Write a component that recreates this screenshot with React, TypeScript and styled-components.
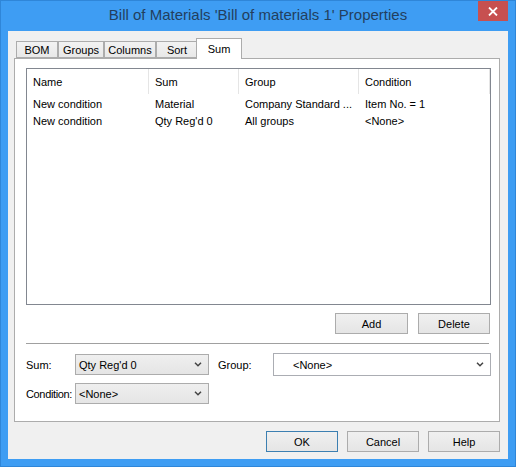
import React from "react";
import styled, { createGlobalStyle } from "styled-components";

const GlobalStyle = createGlobalStyle`
    html, body {
        margin: 0;
        padding: 0;
    }
    body {
        font-family: "Liberation Sans", Arial, sans-serif;
        font-size: 11px;
        color: #000;
    }
`;

// 창 프레임
const Window = styled.div`
    width: 516px;
    height: 467px;
    box-sizing: border-box;
    background: #3e9df3;
    border: 1px solid #2f86d8;
    display: flex;
    flex-direction: column;
`;

const TitleBar = styled.div`
    height: 30px;
    display: grid;
    grid-template-columns: 1fr auto 1fr;
    align-items: start;
`;

const Title = styled.div`
    grid-column: 2;
    font-size: 15px;
    line-height: 28px;
    color: #233f5e;
    white-space: nowrap;
`;

const CloseButton = styled.div`
    grid-column: 3;
    justify-self: end;
    width: 30px;
    height: 20px;
    margin-right: 7px;
    background: #c75050;
    display: flex;
    align-items: center;
    justify-content: center;
`;

const Client = styled.div`
    flex: 1;
    margin: 0 7px 7px;
    background: #f0f0f0;
    padding: 7px 8px 7px 6px;
    display: flex;
    flex-direction: column;
`;

const TabStrip = styled.div`
    height: 20px;
    display: flex;
    align-items: flex-end;
    padding-left: 2px;
`;

interface TabProps {
    $active?: boolean;
    $width: number;
}

const Tab = styled.div<TabProps>`
    box-sizing: border-box;
    width: ${({ $width, $active }) => ($active ? $width + 4 : $width)}px;
    height: ${({ $active }) => ($active ? 21 : 17)}px;
    margin: ${({ $active }) => ($active ? "0 -2px -1px" : "0")};
    border: 1px solid #acacac;
    border-bottom: ${({ $active }) => ($active ? "none" : "1px solid #acacac")};
    background: ${({ $active }) =>
        $active ? "#fff" : "linear-gradient(#f2f2f2, #e8e8e8)"};
    position: relative;
    z-index: ${({ $active }) => ($active ? 1 : 0)};
    display: flex;
    justify-content: center;
    align-items: ${({ $active }) => ($active ? "flex-start" : "center")};
    padding-top: ${({ $active }) => ($active ? "3px" : "0")};
    line-height: 14px;
`;

const Panel = styled.div`
    flex: 1;
    background: #fff;
    border: 1px solid #acacac;
    padding: 9px 8px 0 11px;
    display: flex;
    flex-direction: column;
`;

// 리스트 뷰
const ListView = styled.div`
    height: 237px;
    box-sizing: border-box;
    border: 1px solid #828790;
    background: #fff;
`;

const Columns = "122px 90px 120px 131px";

const HeaderRow = styled.div`
    display: grid;
    grid-template-columns: ${Columns};
    height: 25px;
`;

const HeaderCell = styled.div`
    box-sizing: border-box;
    border-right: 1px solid #e5e5e5;
    padding-left: 6px;
    display: flex;
    align-items: center;
    padding-top: 1px;
`;

const DataRow = styled.div<{ $first?: boolean }>`
    display: grid;
    grid-template-columns: ${Columns};
    height: 17px;
    align-items: center;
    margin-top: ${({ $first }) => ($first ? "1px" : "0")};
`;

const Cell = styled.div`
    padding-left: 6px;
    white-space: nowrap;
    overflow: hidden;
`;

const ActionRow = styled.div`
    display: flex;
    justify-content: flex-end;
    gap: 10px;
    margin-top: 8px;
    margin-right: 1px;
`;

interface ButtonProps {
    $default?: boolean;
    $width?: number;
}

const Button = styled.div<ButtonProps>`
    box-sizing: border-box;
    width: ${({ $width }) => $width ?? 73}px;
    height: 21px;
    border: 1px solid ${({ $default }) => ($default ? "#3c7fb1" : "#acacac")};
    background: linear-gradient(#f0f0f0, #e5e5e5);
    display: flex;
    align-items: center;
    justify-content: center;
`;

const Separator = styled.div`
    margin: 9px 2px 0 0;
    height: 0;
    border-top: 1px solid #a0a0a0;
`;

const FieldRow = styled.div<{ $top: number }>`
    display: flex;
    align-items: center;
    margin-top: ${({ $top }) => $top}px;
`;

const Label = styled.div<{ $width: number; $indent?: number; $tight?: boolean }>`
    box-sizing: border-box;
    width: ${({ $width }) => $width}px;
    padding-left: ${({ $indent }) => $indent ?? 0}px;
    white-space: nowrap;
    letter-spacing: ${({ $tight }) => ($tight ? "-0.35px" : "normal")};
`;

interface ComboProps {
    $width?: number;
    $editable?: boolean;
}

const Combo = styled.div<ComboProps>`
    box-sizing: border-box;
    ${({ $width }) => ($width ? `width: ${$width}px;` : "flex: 1;")}
    height: ${({ $editable }) => ($editable ? 23 : 21)}px;
    border: 1px solid ${({ $editable }) => ($editable ? "#abadb3" : "#acacac")};
    background: ${({ $editable }) =>
        $editable ? "#fff" : "linear-gradient(#efefef, #e5e5e5)"};
    padding-left: ${({ $editable }) => ($editable ? 19 : 3)}px;
    padding-right: 6px;
    display: flex;
    align-items: center;
    justify-content: space-between;
`;

const Chevron = () => (
    <svg width="8" height="5" viewBox="0 0 8 5">
        <path d="M1 0.8 L4 3.8 L7 0.8" fill="none" stroke="#444" strokeWidth="1.5" />
    </svg>
);

const DialogButtons = styled.div`
    display: flex;
    justify-content: flex-end;
    gap: 9px;
    margin-top: 9px;
`;

const rows = [
    ["New condition", "Material", "Company Standard ...", "Item No. = 1"],
    ["New condition", "Qty Reg'd 0", "All groups", "<None>"],
];

const tabs = [
    { label: "BOM", width: 42 },
    { label: "Groups", width: 46 },
    { label: "Columns", width: 52 },
    { label: "Sort", width: 42 },
    { label: "Sum", width: 42, active: true },
];

export default function App() {
    return (
        <>
            <GlobalStyle />
            <Window>
                <TitleBar>
                    <Title>Bill of Materials 'Bill of materials 1' Properties</Title>
                    <CloseButton>
                        <svg width="10" height="9" viewBox="0 0 10 9">
                            <path d="M1 0.5 L9 8.5 M9 0.5 L1 8.5" stroke="#fff" strokeWidth="1.8" />
                        </svg>
                    </CloseButton>
                </TitleBar>
                <Client>
                    <TabStrip>
                        {tabs.map((t) => (
                            <Tab key={t.label} $width={t.width} $active={t.active}>
                                {t.label}
                            </Tab>
                        ))}
                    </TabStrip>
                    <Panel>
                        <ListView>
                            <HeaderRow>
                                <HeaderCell>Name</HeaderCell>
                                <HeaderCell>Sum</HeaderCell>
                                <HeaderCell>Group</HeaderCell>
                                <HeaderCell>Condition</HeaderCell>
                            </HeaderRow>
                            {rows.map((r, i) => (
                                <DataRow key={i} $first={i === 0}>
                                    {r.map((c, j) => (
                                        <Cell key={j}>{c}</Cell>
                                    ))}
                                </DataRow>
                            ))}
                        </ListView>
                        <ActionRow>
                            <Button>Add</Button>
                            <Button $width={72}>Delete</Button>
                        </ActionRow>
                        <Separator />
                        <FieldRow $top={9}>
                            <Label $width={49}>Sum:</Label>
                            <Combo $width={134}>
                                <span>Qty Reg'd 0</span>
                                <Chevron />
                            </Combo>
                            <Label $width={64} $indent={9}>
                                Group:
                            </Label>
                            <Combo $editable>
                                <span>&lt;None&gt;</span>
                                <Chevron />
                            </Combo>
                        </FieldRow>
                        <FieldRow $top={7}>
                            <Label $width={49} $tight>
                                Condition:
                            </Label>
                            <Combo $width={134}>
                                <span>&lt;None&gt;</span>
                                <Chevron />
                            </Combo>
                        </FieldRow>
                    </Panel>
                    <DialogButtons>
                        <Button $default $width={72}>
                            OK
                        </Button>
                        <Button $width={72}>Cancel</Button>
                        <Button $width={72}>Help</Button>
                    </DialogButtons>
                </Client>
            </Window>
        </>
    );
}
